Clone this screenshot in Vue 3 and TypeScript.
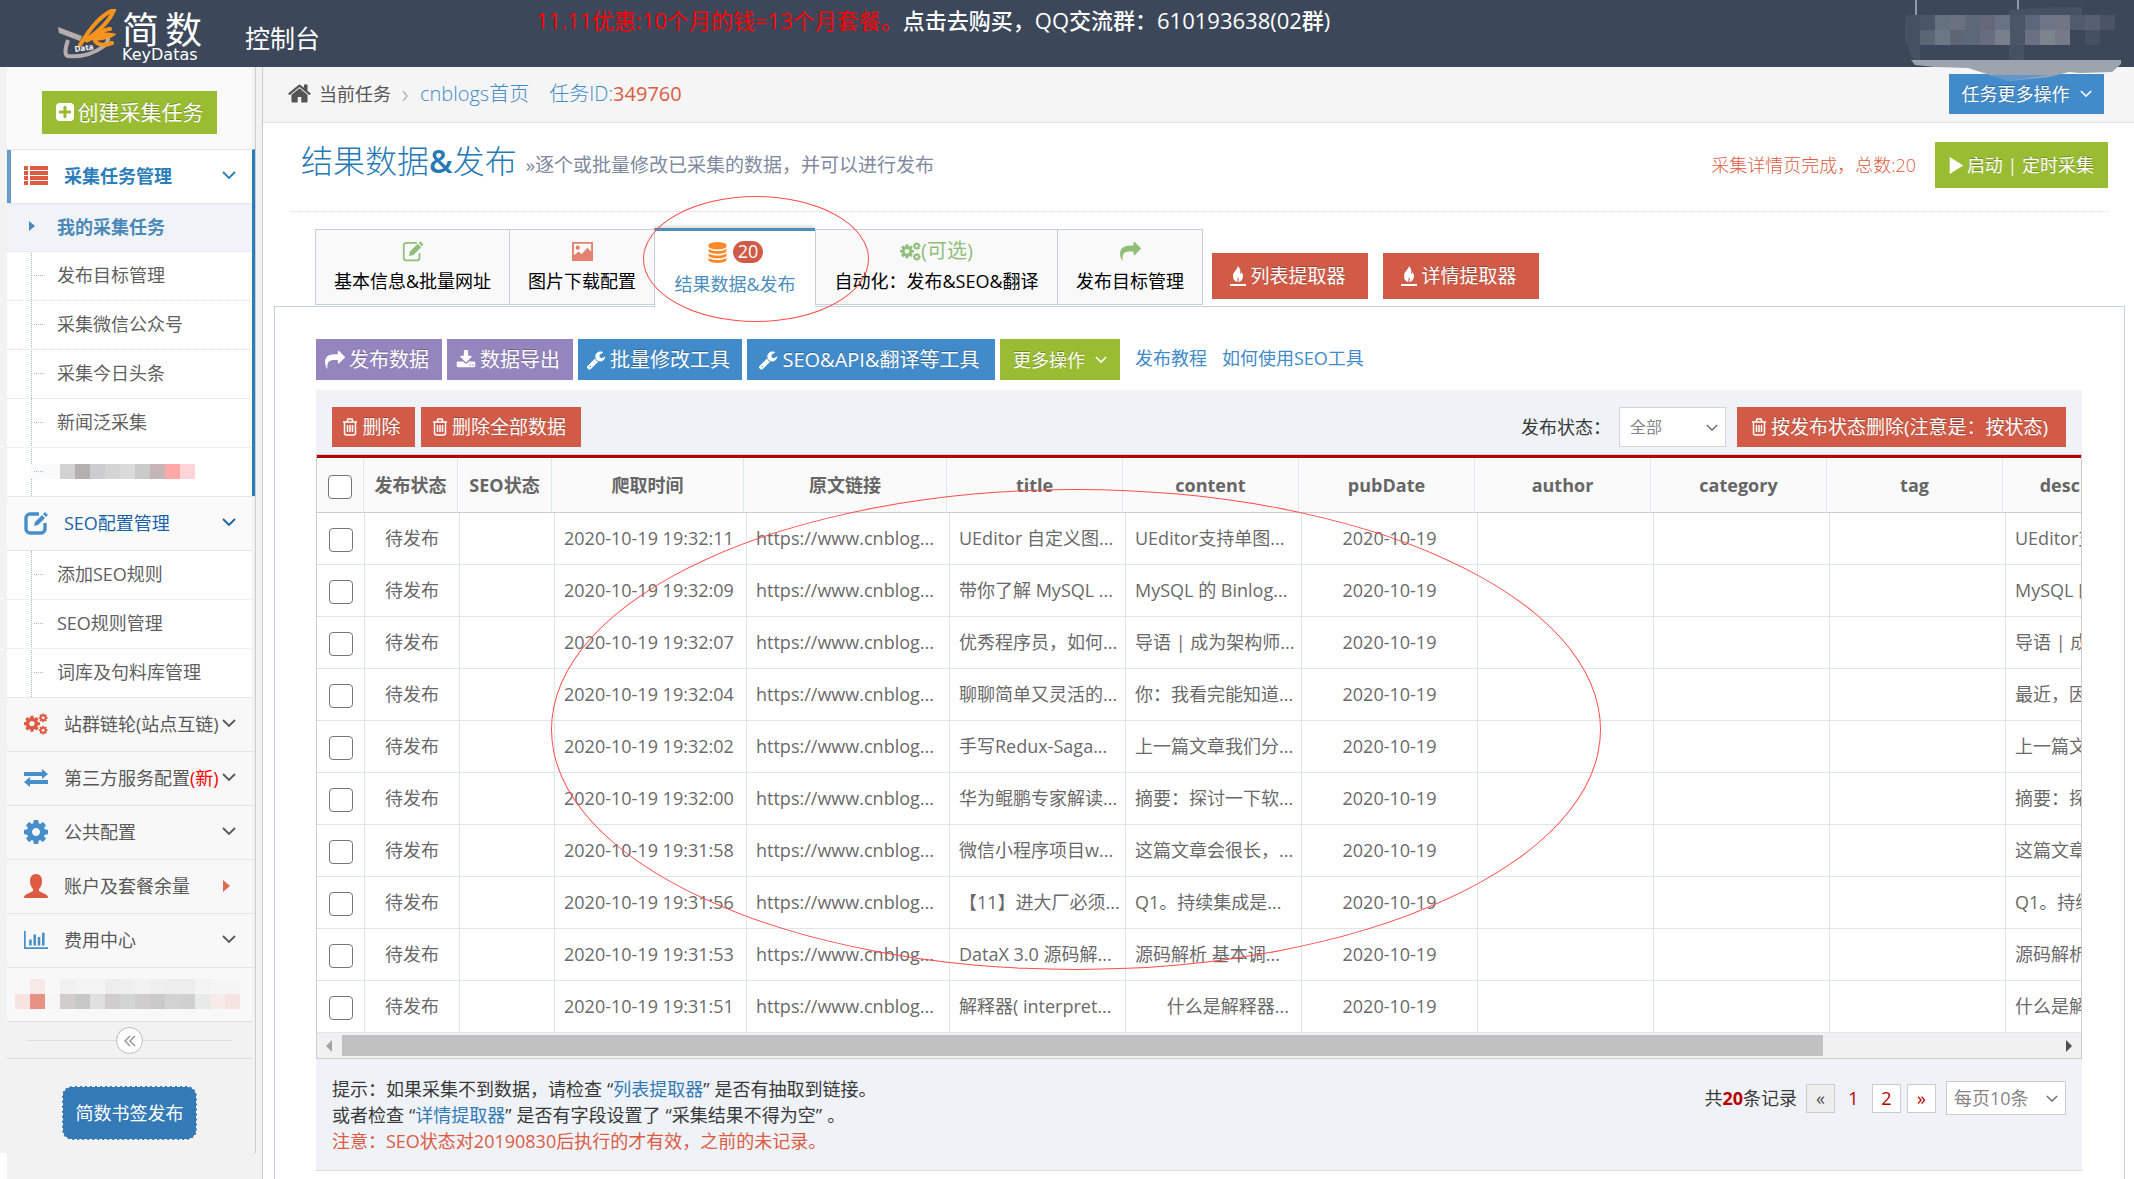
<script setup lang="ts">
import { ref } from 'vue'

interface SubItem { label: string; active?: boolean }
interface Section { label: string; icon: string; tone: string; extra?: string; closed?: boolean }
interface Row { time: string; title: string; content: string; desc: string }

const taskItems: SubItem[] = [
  { label: '我的采集任务', active: true },
  { label: '发布目标管理' },
  { label: '采集微信公众号' },
  { label: '采集今日头条' },
  { label: '新闻泛采集' },
]
const seoItems: SubItem[] = [
  { label: '添加SEO规则' },
  { label: 'SEO规则管理' },
  { label: '词库及句料库管理' },
]
const sections: Section[] = [
  { label: '站群链轮(站点互链)', icon: 'cogs', tone: 'red' },
  { label: '第三方服务配置', icon: 'exchange', tone: 'blue', extra: '(新)' },
  { label: '公共配置', icon: 'cog', tone: 'blue' },
  { label: '账户及套餐余量', icon: 'user', tone: 'red', closed: true },
  { label: '费用中心', icon: 'chart', tone: 'blue' },
]

const maskedItem = ['#f9fbfe', '#fafafa', '#d2d2d2', '#b2b1b0', '#cdcdd0', '#d3d4d3', '#dadada', '#cacaca', '#c4b6b6', '#ffa8a8', '#ffd4d8']
const maskedTop = ['#f8f8f8', '#f5eae8', '#f8f8f8', '#f1f1f1', '#f3f3f3', '#f3f3f3', '#ededed', '#efefef', '#f2f2f2', '#efefef', '#ededed', '#ededed', '#f3f3f3', '#f5f5f5', '#f5f5f5']
const maskedBottom = ['#f5e4e0', '#e69284', '#f6f6f6', '#cfcecc', '#c6c9c8', '#e0e0e0', '#cfcecc', '#d2d5d4', '#cfcecc', '#cacaca', '#d2d2d2', '#d0d0d0', '#e6eae9', '#f7eae8', '#f5e4e0']
const accountRows = [
  ['#4a5568', '#65717f', '#6a7282', '#5d6879', '#646878', '#6a7286', '#4a5666', '#5c677c', '#707488', '#727684', '#525b6b', '#566070', '#4a5464'],
  ['#5a6673', '#6c7885', '#5e6676', '#5c697b', '#686c80', '#787f8b', '#4a5666', '#6a7186', '#7c858b', '#777a86', '#3c475a', '#455062', '#3c475a'],
]

const columns = ['发布状态', 'SEO状态', '爬取时间', '原文链接', 'title', 'content', 'pubDate', 'author', 'category', 'tag', 'description']
const rows: Row[] = [
  { time: '19:32:11', title: 'UEditor 自定义图...', content: 'UEditor支持单图...', desc: 'UEditor支持单图...' },
  { time: '19:32:09', title: '带你了解 MySQL ...', content: 'MySQL 的 Binlog...', desc: 'MySQL 的 Binlog...' },
  { time: '19:32:07', title: '优秀程序员，如何...', content: '导语 | 成为架构师...', desc: '导语 | 成为架构师...' },
  { time: '19:32:04', title: '聊聊简单又灵活的...', content: '你：我看完能知道...', desc: '最近，因为工作...' },
  { time: '19:32:02', title: '手写Redux-Saga...', content: '上一篇文章我们分...', desc: '上一篇文章我们分...' },
  { time: '19:32:00', title: '华为鲲鹏专家解读...', content: '摘要：探讨一下软...', desc: '摘要：探讨一下软...' },
  { time: '19:31:58', title: '微信小程序项目w...', content: '这篇文章会很长，...', desc: '这篇文章会很长，...' },
  { time: '19:31:56', title: '【11】进大厂必须...', content: 'Q1。持续集成是...', desc: 'Q1。持续集成是...' },
  { time: '19:31:53', title: 'DataX 3.0 源码解...', content: '源码解析 基本调...', desc: '源码解析 基本调...' },
  { time: '19:31:51', title: '解释器( interpret...', content: '\u3000\u2002 什么是解释器...', desc: '什么是解释器...' },
]

const status = ref('全部')
const pageSize = ref('每页10条')
</script>

<template>
  <div class="page">
    <svg class="sprite" aria-hidden="true">
      <symbol id="i-home" viewBox="0 0 1792 1792"><path d="M1472 992v480q0 26-19 45t-45 19h-384v-384h-256v384h-384q-26 0-45-19t-19-45v-480q0-1 .5-3t.5-3l575-474 575 474q1 2 1 6zm223-69l-62 74q-8 9-21 11h-3q-13 0-21-7l-692-577-692 577q-12 8-24 7-13-2-21-11l-62-74q-8-10-7-23.5t11-21.5l719-599q32-26 76-26t76 26l244 204v-195q0-14 9-23t23-9h192q14 0 23 9t9 23v408l219 182q10 8 11 21.5t-7 23.5z" /></symbol>
      <symbol id="i-plus" viewBox="128 128 1536 1536"><path d="M1408 960v-128q0-26-19-45t-45-19h-320v-320q0-26-19-45t-45-19h-128q-26 0-45 19t-19 45v320h-320q-26 0-45 19t-19 45v128q0 26 19 45t45 19h320v320q0 26 19 45t45 19h128q26 0 45-19t19-45v-320h320q26 0 45-19t19-45zm256-544v960q0 119-84.5 203.5t-203.5 84.5h-960q-119 0-203.5-84.5t-84.5-203.5v-960q0-119 84.5-203.5t203.5-84.5h960q119 0 203.5 84.5t84.5 203.5z" /></symbol>
      <symbol id="i-database" viewBox="0 0 1792 1792"><path d="M896 768q237 0 443-43t325-127v170q0 69-103 128t-280 93.5-385 34.5-385-34.5-280-93.5-103-128v-170q119 84 325 127t443 43zm0 768q237 0 443-43t325-127v170q0 69-103 128t-280 93.5-385 34.5-385-34.5-280-93.5-103-128v-170q119 84 325 127t443 43zm0-384q237 0 443-43t325-127v170q0 69-103 128t-280 93.5-385 34.5-385-34.5-280-93.5-103-128v-170q119 84 325 127t443 43zm0-1152q208 0 385 34.5t280 93.5 103 128v128q0 69-103 128t-280 93.5-385 34.5-385-34.5-280-93.5-103-128v-128q0-69 103-128t280-93.5 385-34.5z" /></symbol>
      <symbol id="i-share" viewBox="0 0 1792 1792"><path d="M1792 640q0 26-19 45l-512 512q-19 19-45 19t-45-19-19-45v-256h-224q-98 0-175.500 6t-154 21.500-133 42.500-105.500 69.500-80 101-48.500 138.500-17.500 181q0 55 5 123 0 6 2.500 23.500t2.500 26.500q0 15-8.500 25t-23.500 10q-16 0-28-17-7-9-13-22t-13.500-30-10.500-24q-127-285-127-451 0-199 53-333 162-403 875-403h224v-256q0-26 19-45t45-19 45 19l512 512q19 19 19 45z" /></symbol>
      <symbol id="i-cog" viewBox="128 128 1536 1536"><path id="cog-shape" d="M1152 896q0-106-75-181t-181-75-181 75-75 181 75 181 181 75 181-75 75-181zm512-109v222q0 12-8 23t-20 13l-185 28q-19 54-39 91 35 50 107 138 10 12 10 25t-9 23q-27 37-99 108t-94 71q-12 0-26-9l-138-108q-44 23-91 38-16 136-29 186-7 28-36 28h-222q-14 0-24.500-8.500t-11.500-21.500l-28-184q-49-16-90-37l-141 107q-10 9-25 9-14 0-25-11-126-114-165-168-7-10-7-23 0-12 8-23 15-21 51-66.500t54-70.500q-27-50-41-99l-183-27q-13-2-21-12.500t-8-23.500v-222q0-12 8-23t19-13l186-28q14-46 39-92-40-57-107-138-10-12-10-24 0-10 9-23 26-36 98.500-107.500t94.500-71.500q13 0 26 10l138 107q44-23 91-38 16-136 29-186 7-28 36-28h222q14 0 24.500 8.500t11.500 21.500l28 184q49 16 90 37l142-107q9-9 24-9 13 0 25 10 129 119 165 170 7 8 7 22 0 12-8 23-15 21-51 66.500t-54 70.500q26 50 41 98l183 28q13 2 21 12.500t8 23.500z" /></symbol>
      <symbol id="i-cogs" viewBox="0 0 1920 1792">
        <use href="#cog-shape" transform="translate(-107 128) scale(.83)" />
        <use href="#cog-shape" transform="translate(1120 -10) scale(.46)" />
        <use href="#cog-shape" transform="translate(1120 980) scale(.46)" />
      </symbol>
      <symbol id="i-wrench" viewBox="0 0 1792 1792"><path d="M448 1472q0-26-19-45t-45-19-45 19-19 45 19 45 45 19 45-19 19-45zm644-420l-682 682q-37 37-90 37-52 0-91-37l-106-108q-38-36-38-90 0-53 38-91l681-681q39 98 114.500 173.500t173.500 114.500zm634-435q0 39-23 106-47 134-164.500 217.500t-258.500 83.500q-185 0-316.500-131.500t-131.500-316.500 131.500-316.500 316.500-131.500q58 0 121.500 16.500t107.500 46.500q16 11 16 28t-16 28l-293 169v224l193 107q5-3 79-48.500t135.500-81 70.500-35.500q15 0 23.500 10t8.500 25z" /></symbol>
      <symbol id="i-download" viewBox="0 0 1792 1792"><path d="M1344 1344q0-26-19-45t-45-19-45 19-19 45 19 45 45 19 45-19 19-45zm256 0q0-26-19-45t-45-19-45 19-19 45 19 45 45 19 45-19 19-45zm128-224v320q0 40-28 68t-68 28h-1472q-40 0-68-28t-28-68v-320q0-40 28-68t68-28h465l135 136q58 56 136 56t136-56l136-136h464q40 0 68 28t28 68zm-325-569q17 41-14 70l-448 448q-18 19-45 19t-45-19l-448-448q-31-29-14-70 17-39 59-39h256v-448q0-26 19-45t45-19h256q26 0 45 19t19 45v448h256q42 0 59 39z" /></symbol>
      <symbol id="i-list" viewBox="0 0 24 20"><path d="M0 0h4v4H0zM6 0h18v4H6zM0 5h4v4H0zM6 5h18v4H6zM0 10h4v4H0zM6 10h18v4H6zM0 15h4v4H0zM6 15h18v4H6z" /></symbol>
      <symbol id="i-edit" viewBox="0 0 24 24"><path d="M15 3H6a4 4 0 0 0-4 4v11a4 4 0 0 0 4 4h11a4 4 0 0 0 4-4v-6" fill="none" stroke="currentColor" stroke-width="3.400" /><path d="M10 15l1-4 7-7 3 3-7 7zM19 3l2-2 3 3-2 2z" /></symbol>
      <symbol id="i-note" viewBox="0 0 24 24"><path d="M17 2H5a3 3 0 0 0-3 3v14a3 3 0 0 0 3 3h12a3 3 0 0 0 3-3v-5" fill="none" stroke="currentColor" stroke-width="2" /><path d="M8 17l1-5 9-9 4 4-9 9zM19 2l1-1q1-1 2 0l2 2q1 1 0 2l-1 1z" /></symbol>
      <symbol id="i-image" viewBox="0 0 22 20"><path d="M0 0h22v20H0zM2 2v12l5-4 3 3 6-7 4 4V2z" fill-rule="evenodd" /><circle cx="6" cy="6" r="2.200" /></symbol>
      <symbol id="i-exchange" viewBox="0 0 24 18"><path d="M0 3h18V0l6 5-6 5V7H0zM24 15H6v3l-6-5 6-5v3h18z" /></symbol>
      <symbol id="i-user" viewBox="0 0 24 24"><path d="M12 0c4 0 6 3 6 7 0 3-1 6-3 8v2l6 3q3 1 3 4H0q0-3 3-4l6-3v-2c-2-2-3-5-3-8 0-4 2-7 6-7z" /></symbol>
      <symbol id="i-chart" viewBox="0 0 28 21"><path d="M0 0h2v19h26v2H0zM6 10h3v7H6zM11 4h3v13h-3zM16 7h3v10h-3zM21 2h3v15h-3z" /></symbol>
      <symbol id="i-trash" viewBox="0 0 16 18"><path d="M1 4h14M5 4l1-3h4l1 3M2.500 4v11q0 2 2 2h7q2 0 2-2V4M5.500 7v7M8 7v7M10.500 7v7" fill="none" stroke="currentColor" stroke-width="1.500" /></symbol>
      <symbol id="i-fire" viewBox="0 0 16 20"><path d="M8 0c-1 4-5 6-5 10 0 3 1 5 4 6 1-2 0-3 1-5 1 2 1 3 0 5 3 0 5-3 5-6 0-2-1-3-2-4 0 1 0 2-1 2 1-3 0-6-2-8zM0 18h16v2H0z" /></symbol>
      <symbol id="i-down" viewBox="0 0 14 9"><path d="M1 1l6 6 6-6" fill="none" stroke="currentColor" stroke-width="1.800" /></symbol>
      <symbol id="i-play" viewBox="0 0 16 20"><path d="M0 0l16 10L0 20z" /></symbol>
    </svg>

    <header class="topbar">
      <div class="logo">
        <svg class="logo-mark" viewBox="0 0 58 50" aria-hidden="true">
          <path d="M0 18l24 9-2 5L1 24z" fill="#b5adac" />
          <path d="M10 31q-5 15 0 16 20 2 36-10 6-6 3-10" fill="none" stroke="#b5adac" stroke-width="4" />
          <path d="M56 1Q40 6 22 36M56 1Q50 16 28 31M52 20q-4-1-24 12 14-8 26-6-4 3-18 4 4 9 18 4" fill="none" stroke="#f7941d" stroke-width="4" stroke-linecap="round" />
          <text x="17" y="43" font-size="8" font-weight="bold" fill="#fff" transform="rotate(-8 17 43)">Data</text>
        </svg>
        <span class="logo-text"><b><span>简</span><span>数</span></b><i>KeyDatas</i></span>
      </div>
      <a href="#" class="console">控制台</a>
      <p class="notice"><span class="promo">11.11优惠:10个月的钱=13个月套餐。</span><a href="#">点击去购买，QQ交流群：610193638(02群)</a></p>
      <div class="account">
        <svg class="account-smear" viewBox="0 0 230 84" aria-hidden="true">
          <path d="M12 0v15M114 0v10" stroke="#e8eaee" />
          <path d="M1 20q0-5 5-5h10v45H10q-6-6-6-15-3-2-3-6zM105 10l45-3h28v8h25q6 0 6 6 0 9-6 9H105z" fill="#465164" />
          <path d="M7 60h210v4l-9 8-32 1-11-1-20 5-40 4-19-6-22-7-33-1-20-2z" fill="#9ea4ae" />
          <path d="M86 75h59l-20 3-20 3z" fill="#5f97cb" />
          <path d="M105 45h15v15h-15z" fill="#465164" />
        </svg>
        <div class="account-cells">
          <div v-for="(r, i) in accountRows" :key="i" class="mosaic"><i v-for="(c, j) in r" :key="j" :style="{ background: c }"></i></div>
        </div>
      </div>
    </header>

    <div class="body">
      <aside class="sidebar">
        <div class="side-inner">
          <div class="create-box"><button class="btn green create"><svg class="ic"><use href="#i-plus" /></svg>创建采集任务</button></div>
          <section class="group active">
            <a href="#" class="head current"><svg class="nav-ic red"><use href="#i-list" /></svg><span>采集任务管理</span><svg class="chev"><use href="#i-down" /></svg></a>
            <ul class="sub">
              <li v-for="item in taskItems" :key="item.label" :class="{ on: item.active }"><a href="#">{{ item.label }}</a></li>
              <li><div class="mosaic masked"><i v-for="(c, j) in maskedItem" :key="j" :style="{ background: c }"></i></div></li>
            </ul>
          </section>
          <section class="group">
            <a href="#" class="head open"><svg class="nav-ic blue"><use href="#i-edit" /></svg><span>SEO配置管理</span><svg class="chev"><use href="#i-down" /></svg></a>
            <ul class="sub">
              <li v-for="item in seoItems" :key="item.label"><a href="#">{{ item.label }}</a></li>
            </ul>
          </section>
          <section v-for="s in sections" :key="s.label" class="group">
            <a href="#" class="head"><svg class="nav-ic" :class="s.tone"><use :href="'#i-' + s.icon" /></svg><span>{{ s.label }}<em v-if="s.extra">{{ s.extra }}</em></span><svg v-if="!s.closed" class="chev"><use href="#i-down" /></svg><i v-else class="caret"></i></a>
          </section>
          <section class="group">
            <div class="head hidden-item">
              <div>
                <div class="mosaic"><i v-for="(c, j) in maskedTop" :key="j" :style="{ background: c }"></i></div>
                <div class="mosaic"><i v-for="(c, j) in maskedBottom" :key="j" :style="{ background: c }"></i></div>
              </div>
            </div>
          </section>
          <div class="collapse"><button aria-label="收起菜单"><svg viewBox="0 0 12 12"><path d="M6 1L1 6l5 5M11 1L6 6l5 5" fill="none" stroke="#999" stroke-width="1.500" /></svg></button></div>
          <div class="bookmark"><button>简数书签发布</button></div>
        </div>
        <div class="side-foot"></div>
      </aside>

      <main class="main">
        <nav class="crumbs">
          <svg class="home"><use href="#i-home" /></svg><span>当前任务</span>
          <svg class="sep" viewBox="0 0 6 12"><path d="M1 1l4 5-4 5" fill="none" stroke="#b2b6bf" stroke-width="1.500" /></svg>
          <a href="#" class="big">cnblogs首页</a><a href="#" class="big">任务ID:<b>349760</b></a>
          <button class="btn blue more-task">任务更多操作<svg class="arr"><use href="#i-down" /></svg></button>
        </nav>

        <div class="title-row">
          <h1>结果数据<b>&amp;</b>发布</h1><p class="subtitle">»逐个或批量修改已采集的数据，并可以进行发布</p>
          <span class="state">采集详情页完成，总数:20</span>
          <button class="btn green start"><svg class="play"><use href="#i-play" /></svg>启动 | 定时采集</button>
        </div>

        <div class="tabs">
          <a href="#" class="tab t1"><span class="top lime"><svg><use href="#i-note" /></svg></span>基本信息&amp;批量网址</a>
          <a href="#" class="tab t2"><span class="top salmon"><svg><use href="#i-image" /></svg></span>图片下载配置</a>
          <a href="#" class="tab t3 sel"><span class="top orange"><svg><use href="#i-database" /></svg><b class="badge">20</b></span>结果数据&amp;发布</a>
          <a href="#" class="tab t4"><span class="top lime"><svg><use href="#i-cogs" /></svg>(可选)</span>自动化：发布&amp;SEO&amp;翻译</a>
          <a href="#" class="tab t5"><span class="top lime"><svg><use href="#i-share" /></svg></span>发布目标管理</a>
          <button class="btn red extract"><svg class="fire"><use href="#i-fire" /></svg>列表提取器</button>
          <button class="btn red extract second"><svg class="fire"><use href="#i-fire" /></svg>详情提取器</button>
        </div>

        <div class="content">
          <div class="tools">
            <button class="btn purple w1"><svg class="ic"><use href="#i-share" /></svg>发布数据</button>
            <button class="btn purple w1"><svg class="ic"><use href="#i-download" /></svg>数据导出</button>
            <button class="btn blue w2"><svg class="ic"><use href="#i-wrench" /></svg>批量修改工具</button>
            <button class="btn blue w3"><svg class="ic"><use href="#i-wrench" /></svg>SEO&amp;API&amp;翻译等工具</button>
            <button class="btn green w4">更多操作<svg class="arr"><use href="#i-down" /></svg></button>
            <a href="#">发布教程</a><a href="#">如何使用SEO工具</a>
          </div>

          <div class="panel">
            <div class="filters">
              <button class="btn red del"><svg class="bin"><use href="#i-trash" /></svg>删除</button>
              <button class="btn red del-all"><svg class="bin"><use href="#i-trash" /></svg>删除全部数据</button>
              <label for="status">发布状态：</label>
              <div class="select status"><select id="status" v-model="status"><option>全部</option></select><svg><use href="#i-down" /></svg></div>
              <button class="btn red del-state"><svg class="bin"><use href="#i-trash" /></svg>按发布状态删除(注意是：按状态)</button>
            </div>

            <div class="grid">
              <table class="grid-head">
                <colgroup><col class="c-check"><col class="c-state"><col class="c-state"><col class="c-time"><col class="c-link"><col v-for="n in 7" :key="n" class="c-field"></colgroup>
                <thead><tr><th><input type="checkbox" aria-label="全选"></th><th v-for="c in columns" :key="c">{{ c }}</th></tr></thead>
              </table>
              <table class="grid-body">
                <colgroup><col class="c-check"><col class="c-state"><col class="c-state"><col class="c-time"><col class="c-link"><col v-for="n in 7" :key="n" class="c-field"></colgroup>
                <tbody>
                  <tr v-for="r in rows" :key="r.time">
                    <td class="mid"><input type="checkbox" :aria-label="r.title"></td><td class="mid">待发布</td><td></td><td>2020-10-19 {{ r.time }}</td><td>https://www.cnblog...</td><td>{{ r.title }}</td><td>{{ r.content }}</td><td class="mid">2020-10-19</td><td></td><td></td><td></td><td>{{ r.desc }}</td>
                  </tr>
                </tbody>
              </table>
              <div class="hscroll"><i class="left"></i><div class="track"><div class="thumb"></div></div><i class="right"></i></div>
            </div>

            <div class="foot">
              <div class="tips">
                <p>提示：如果采集不到数据，请检查<q>“<a href="#">列表提取器</a>”</q>是否有抽取到链接。</p>
                <p>或者检查<q>“<a href="#">详情提取器</a>”</q>是否有字段设置了<q>“采集结果不得为空”</q>。</p>
                <p class="warn">注意：SEO状态对20190830后执行的才有效，之前的未记录。</p>
              </div>
              <div class="pager">
                <span class="total">共<b>20</b>条记录</span>
                <button class="pg off" disabled>«</button><span class="now">1</span><button class="pg">2</button><button class="pg next">»</button>
                <div class="select size"><select v-model="pageSize" aria-label="每页条数"><option>每页10条</option></select><svg><use href="#i-down" /></svg></div>
              </div>
            </div>
          </div>
        </div>
      </main>
    </div>

    <div class="ring ring-tab"></div>
    <div class="ring ring-grid"></div>
  </div>
</template>

<style>
body { background: #fff; }
</style>

<style scoped>
* { box-sizing: border-box; }
.page { position: relative; display: flex; flex-direction: column; min-height: 100vh; overflow: hidden; font: 18px/26px "Open Sans", "Noto Sans CJK SC", sans-serif; color: #393939; }
.sprite { position: absolute; width: 0; height: 0; }
svg { fill: currentColor; flex: none; }
a { text-decoration: none; color: #428bca; }
p, h1, ul { margin: 0; padding: 0; }
ul { list-style: none; }
button, select { font: inherit; }

.topbar { position: relative; z-index: 2; display: flex; align-items: center; height: 67px; background: #3c475a; color: #fff; }
.logo { display: flex; align-items: center; margin-left: 58px; width: 187px; }
.logo-mark { width: 58px; height: 50px; }
.logo-text { display: flex; flex-direction: column; margin-left: 6px; padding-top: 4px; }
.logo-text b { display: flex; gap: 6px; font: 400 37px/38px "Noto Sans CJK SC", sans-serif; }
.logo-text i { font: 16px/16px "DejaVu Sans", sans-serif; }
.console { width: 291px; padding-top: 8px; color: #fff; font-size: 25px; }
.notice { align-self: flex-start; padding-top: 7px; font-size: 22px; white-space: nowrap; }
.notice a { color: #fff; font-weight: 500; }
.promo { color: #f00; }
.account { position: absolute; right: 0; top: 0; width: 230px; height: 84px; }
.account-smear { display: block; width: 230px; height: 84px; }
.account-cells { position: absolute; left: 16px; top: 15px; }
.mosaic { display: flex; }
.mosaic i { width: 15px; height: 15px; }

.body { display: flex; flex: 1; }
.sidebar { display: flex; flex-direction: column; width: 263px; flex: none; background: #f2f2f2; border-right: 1px solid #ccc; }
.side-inner { width: 256px; padding-left: 7px; border-right: 1px solid #ccc; padding-bottom: 13px; }
.side-foot { flex: 1; border-left: 7px solid #fff; }
.create-box { width: 245px; height: 82px; padding: 24px 35px 0; background: #fafafa; }
.group { border-right: 3px solid transparent; border-top: 1px solid #e5e5e5; }
.group.active { border-right-color: #2b7dbc; }
.head { display: flex; align-items: center; height: 53px; padding: 0 0 2px 17px; background: #f8f8f8; color: #585858; }
.head span { margin-left: 16px; flex: 1; white-space: nowrap; }
.head em { font-style: normal; color: #f00; }
.nav-ic { width: 24px; height: 24px; }
.chev { width: 14px; height: 9px; margin-right: 16px; }
.caret { margin-right: 22px; border: 6px solid transparent; border-left: 7px solid #dd6a57; border-right: 0; }
.nav-ic.red { color: #dd5a43; }
.nav-ic.blue { color: #478fca; }
.head.current { border-left: 4px solid #629cc9; padding-left: 13px; background: #fff; color: #2b7dbc; font-weight: 700; }
.head.open { background: #fafafa; color: #1963aa; }
.sub { position: relative; background: #fff; border-top: 1px solid #e5e5e5; }
.sub::before { content: ""; position: absolute; left: 24px; top: 0; bottom: 0; border-left: 1px dotted #9dbdd6; }
.sub li { position: relative; display: flex; align-items: center; height: 49px; padding: 0 0 2px 50px; border-bottom: 1px dotted #e0e0e0; }
.sub li:last-child { height: 48px; border-bottom: 0; }
.sub li::before { content: ""; position: absolute; left: 27px; top: 23px; width: 9px; border-top: 1px dotted #9dbdd6; }
.sub a { color: #616161; }
.sub li.on { height: 48px; background: #f0f4f9; }
.sub .on a { color: #4b88b7; font-weight: 700; }
.sub .on::before { left: 22px; top: 17px; width: 0; border: 5px solid transparent; border-left: 6px solid #4b88b7; border-right: 0; }
.masked { margin-left: -27px; }
.hidden-item { padding-left: 8px; }
.collapse { display: flex; justify-content: center; width: 245px; height: 38px; padding-top: 5px; border-top: 1px solid #e0e0e0; border-bottom: 1px solid #ddd; background: linear-gradient(#ddd, #ddd) center 18px / 205px 1px no-repeat; }
.collapse button { display: flex; align-items: center; justify-content: center; width: 27px; height: 27px; padding: 0; border: 1px solid #bbb; border-radius: 50%; background: #fff; }
.collapse svg { width: 12px; height: 12px; }
.bookmark { display: flex; justify-content: center; width: 245px; padding-top: 27px; }
.bookmark button { width: 135px; height: 54px; padding: 0; border: 1px dashed #fff; border-radius: 10px; background: #337ab7; color: #fff; white-space: nowrap; }

.btn { display: inline-flex; align-items: center; justify-content: center; height: 40px; padding: 0 4px 0 0; border: 0; color: #fff; font-size: 19px; line-height: 26px; white-space: nowrap; text-shadow: 0 -1px 0 rgba(0, 0, 0, .25); }
.green { background: #9abc32; }
.blue.btn { background: #428bca; }
.purple { background: #9585bf; }
.red.btn { background: #d15b47; }
.ic { width: 20px; height: 20px; margin-right: 4px; }
.arr { width: 12px; height: 8px; margin-left: 10px; }
.create { width: 175px; height: 43px; padding: 0 0 2px; font-size: 21px; }
.create .ic { width: 18px; height: 18px; }

.main { flex: 1; min-width: 0; }
.crumbs { display: flex; align-items: center; height: 56px; padding: 0 30px 2px 24px; background: #f5f5f5; border-bottom: 1px solid #e5e5e5; color: #555; }
.home { width: 25px; height: 25px; margin-right: 7px; }
.sep { width: 6px; height: 12px; margin: 4px 12px 0 11px; }
.big { margin-right: 20px; font-size: 20px; font-weight: 300; }
.big b { color: #dd5a43; font-weight: 400; }
.more-task { width: 155px; margin-left: auto; padding: 0; font-size: 18px; }
.title-row { display: flex; align-items: center; height: 89px; margin: 0 26px 0 27px; padding: 0 0 4px 11px; border-bottom: 1px dotted #ddd; }
h1 { margin-bottom: 8px; font-size: 32px; line-height: 40px; font-weight: 300; color: #2679b5; white-space: nowrap; }
h1 b { font-weight: 600; }
.subtitle { margin-left: 9px; font-size: 19px; color: #8089a0; white-space: nowrap; }
.state { margin-left: auto; margin-right: 19px; color: #dd5a43; font-weight: 300; }
.start { width: 173px; height: 46px; padding: 0; font-size: 18px; }
.play { width: 15px; height: 17px; margin-right: 3px; }

.tabs { display: flex; height: 78px; margin: 16px 9px 0 52px; }
.tab { display: flex; flex-direction: column; align-items: center; height: 76px; margin-top: 1px; padding-top: 8px; border: 1px solid #c5d0dc; border-right: 0; background: #f9f9f9; color: #000; white-space: nowrap; line-height: 34px; }
.tab .top { display: flex; align-items: center; justify-content: center; height: 26px; font-size: 20px; }
.tab svg { width: 21px; height: 21px; }
.t1 { width: 194px; }
.t2 { width: 145px; }
.t3 { width: 161px; }
.t4 { width: 242px; }
.t5 { width: 146px; }
.tab.t5 { border-right: 1px solid #c5d0dc; }
.tab.sel { position: relative; height: 80px; margin: 0 0 -2px; border-top: 3px solid #4c8fbd; border-bottom: 0; background: #fff; color: #4c8fbd; box-shadow: 0 -2px 3px rgba(0, 0, 0, .15); clip-path: inset(-6px 0 0 0); line-height: 38px; }
.lime { color: #8fbf7a; }
.salmon { color: #e48272; }
.orange { color: #ff892a; }
.badge { height: 22px; margin-left: 5px; padding: 0 5px; border-radius: 11px; background: #d15b47; color: #fff; font-size: 18px; line-height: 21px; font-weight: 400; }
.extract { width: 156px; height: 46px; margin: 25px 0 0 9px; }
.extract.second { margin-left: 15px; }
.fire { width: 16px; height: 20px; margin-right: 4px; }

.content { margin: 0 9px 0 11px; padding: 32px 42px 8px 41px; border: 1px solid #c5d0dc; border-bottom: 0; }
.tools { display: flex; align-items: center; gap: 5px; }
.tools .btn { height: 41px; font-size: 20px; }
.w1 { width: 126px; }
.w2 { width: 164px; }
.w3 { width: 248px; }
.tools .w4 { width: 120px; padding: 0; font-size: 18px; }
.tools a { margin-left: 10px; padding-bottom: 4px; }
.panel { margin-top: 10px; background: #eff3f8; border-bottom: 1px solid #ddd; }
.filters { display: flex; align-items: center; height: 64px; padding: 10px 16px 0; }
.bin { width: 16px; height: 18px; margin-right: 4px; }
.del { width: 83px; margin-right: 6px; }
.del-all { width: 160px; }
.filters label { margin-left: auto; }
.select { position: relative; height: 40px; }
.select select { width: 100%; height: 100%; appearance: none; border: 1px solid #d5d5d5; border-radius: 0; background: #fff; color: #858585; font-size: 16px; padding: 0 10px; }
.select svg { position: absolute; right: 8px; top: 50%; width: 12px; height: 8px; margin-top: -3px; pointer-events: none; color: #777; }
.status { width: 107px; margin: 0 11px 0 8px; }
.del-state { width: 329px; }

.grid { border: 1px solid #ccc; overflow: hidden; background: #fff; color: #6a6a6a; }
table { table-layout: fixed; border-collapse: separate; border-spacing: 0; }
.grid-head { width: 1862px; border-top: 3px solid #b80000; }
.grid-head .c-check { width: 47px; }
.grid-head .c-state { width: 94px; }
.grid-body { width: 1865px; }
.grid-body .c-check { width: 48px; }
.grid-body .c-state { width: 95px; }
.c-time { width: 192px; }
.c-link { width: 203px; }
.c-field { width: 176px; }
th { height: 55px; padding: 0; background: #fafafa; border-right: 1px solid #e0e5ea; border-bottom: 1px solid #ccc; font-weight: 700; white-space: nowrap; color: #666; }
td { height: 52px; padding: 0 0 2px 9px; border-right: 1px solid #e0e5ea; border-bottom: 1px solid #e0e5ea; white-space: pre; overflow: hidden; }
td.mid { padding: 0 0 2px; text-align: center; }
input[type="checkbox"] { display: block; appearance: none; width: 24px; height: 24px; margin: 4px auto 0; border: 1px solid #767676; border-radius: 4px; background: #fff; }
.hscroll { display: flex; align-items: center; height: 25px; padding: 0 9px; background: #f1f1f1; }
.hscroll i { border: 6px solid transparent; }
.hscroll .left { border-left: 0; border-right-color: #a3a3a3; }
.hscroll .right { border-right: 0; border-left-color: #505050; }
.track { flex: 1; margin: 0 10px; }
.thumb { width: 86.4%; height: 21px; background: #c1c1c1; }

.foot { display: flex; justify-content: space-between; height: 111px; padding: 17px 16px 0; }
.tips { white-space: nowrap; }
.tips q { margin: 0 5px; quotes: none; }
.tips a { color: #337ab7; }
.warn { color: #dd5a43; }
.pager { display: flex; align-items: center; height: 32px; margin-top: 6px; }
.total b, .now { color: #b80000; }
.total { margin-right: 9px; }
.pg { width: 29px; height: 29px; padding: 0; border: 1px solid #ccc; background: #fff; color: #b80000; line-height: 24px; }
.pg.off { background: #eee; color: #555; }
.pg.next { margin-left: 6px; }
.now { width: 37px; text-align: center; }
.size { width: 120px; height: 34px; margin-left: 10px; }
.size select { padding: 0 7px; font-size: 18px; border-color: #ccc; }

.ring { position: absolute; z-index: 3; border: 1px solid #ff4d4d; border-radius: 50%; pointer-events: none; }
.ring-tab { left: 643px; top: 196px; width: 226px; height: 126px; }
.ring-grid { left: 551px; top: 489px; width: 1050px; height: 481px; }
</style>
